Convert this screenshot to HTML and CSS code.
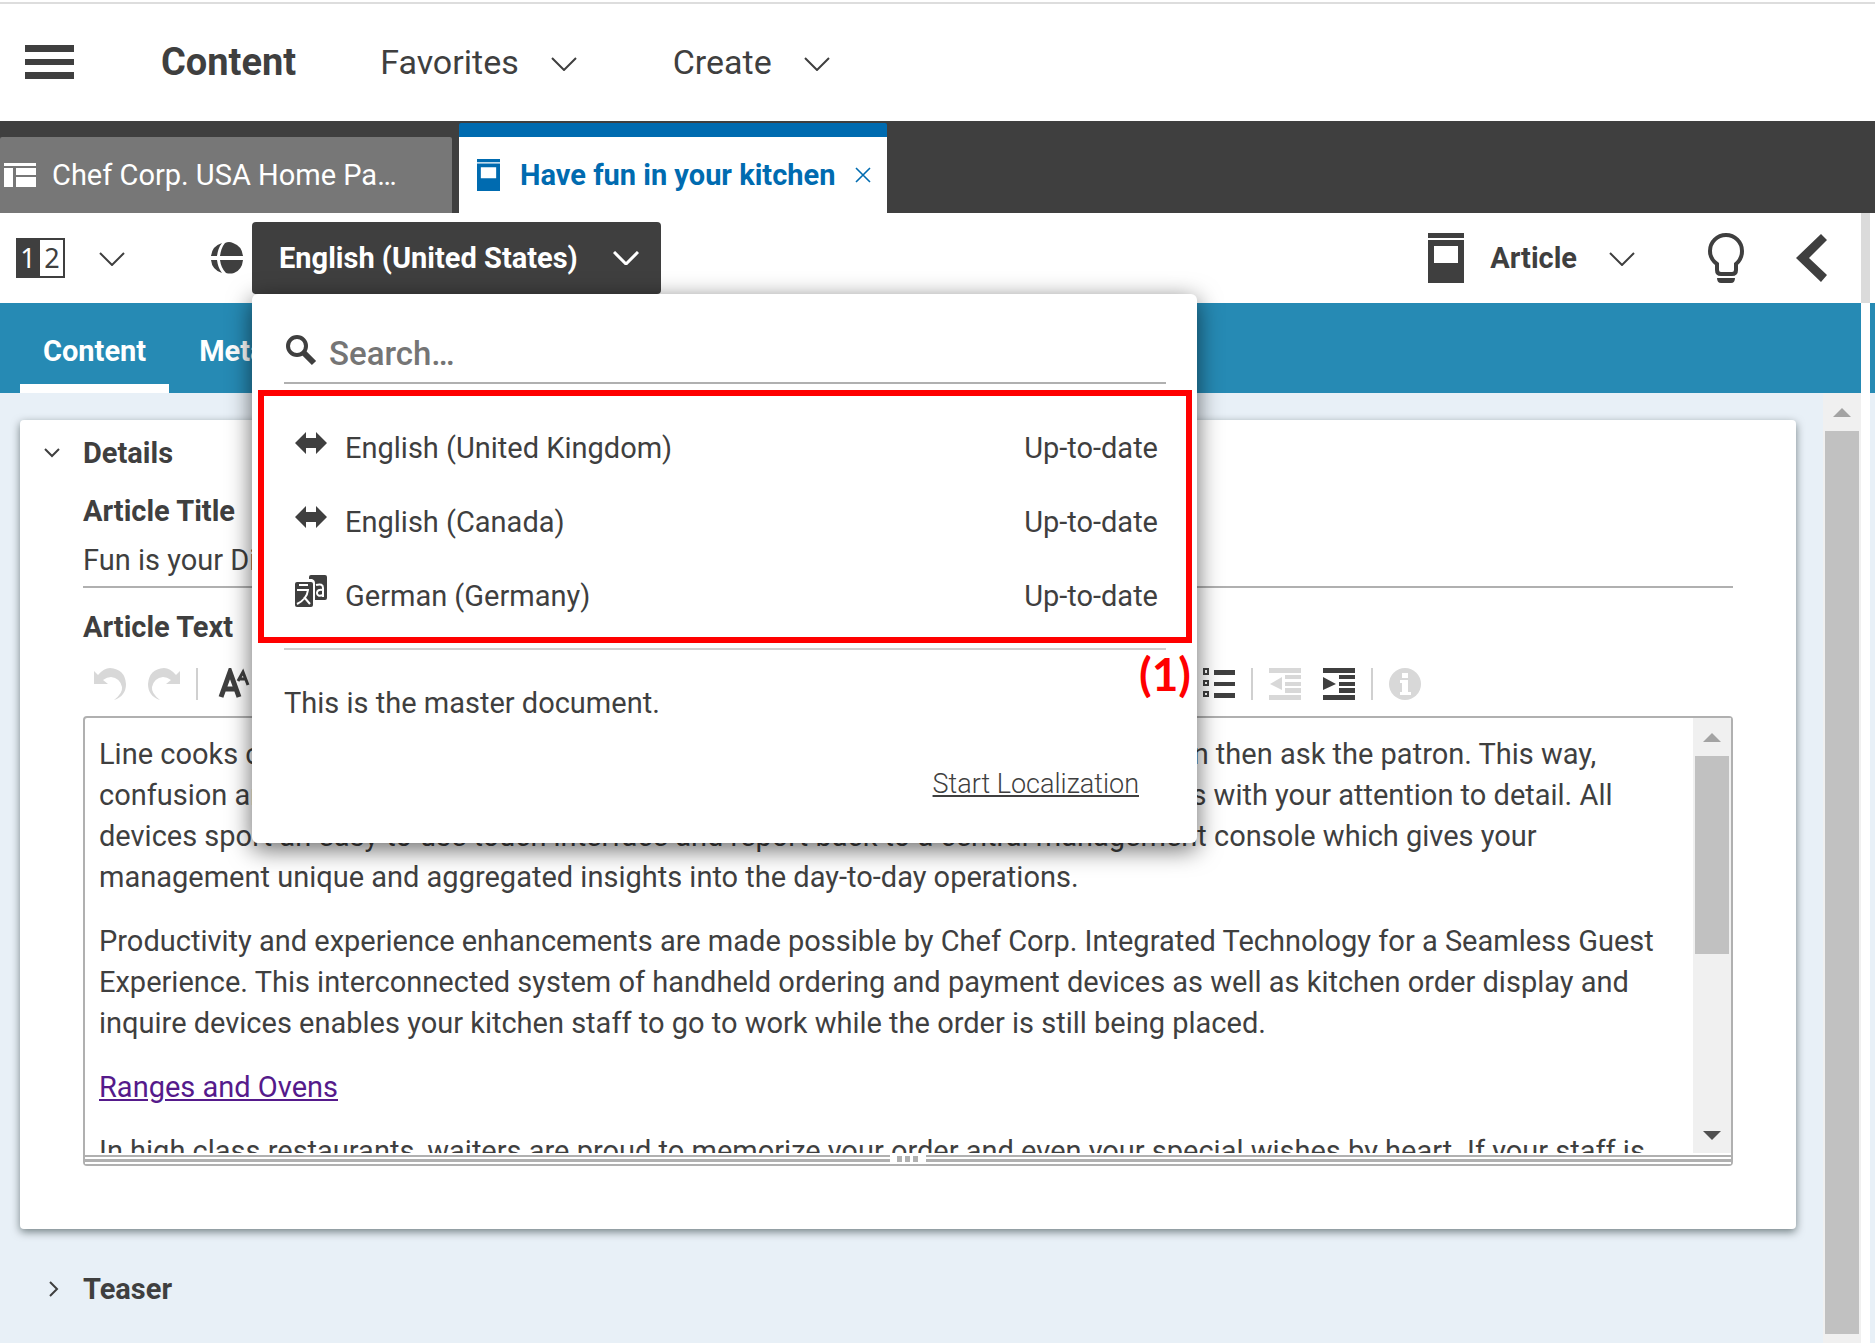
FILE: index.html
```html
<!DOCTYPE html>
<html lang="en">
<head>
<meta charset="utf-8">
<title>Content</title>
<link rel="stylesheet" href="styles.css">
</head>
<body>
<svg class="defs" width="0" height="0" aria-hidden="true">
  <symbol id="chevron" viewBox="0 0 26 14"><path d="M1 1l12 12L25 1" fill="none" stroke="currentColor" stroke-width="2"/></symbol>
  <symbol id="document" viewBox="0 0 36 50"><path d="M0 0h36v5H0zM0 7h36v43H0zM6 13v17h24V13z" fill="currentColor" fill-rule="evenodd"/></symbol>
  <symbol id="sync" viewBox="0 0 32 22"><path d="M0 11L11 0v6h10V0l11 11-11 11v-6H11v6z" fill="currentColor"/></symbol>
</svg>

<header class="topbar">
  <button class="menu-button" aria-label="Menu"><svg width="49" height="34" viewBox="0 0 49 34"><path d="M0 0h49v7H0zM0 14h49v6H0zM0 27h49v7H0z" fill="currentColor"/></svg></button>
  <button class="top-title">Content</button>
  <button class="top-link">Favorites <svg class="chevron"><use href="#chevron"/></svg></button>
  <button class="top-link">Create <svg class="chevron"><use href="#chevron"/></svg></button>
</header>

<nav class="doc-tabs">
  <button class="doc-tab"><svg width="32" height="24" viewBox="0 0 32 24"><path d="M0 0h32v3H0zM0 5h9v19H0zM12 5h20v7H12zM12 14h20v10H12z" fill="currentColor"/></svg>Chef Corp. USA Home Pa…</button>
  <div class="doc-tab active">
    <svg width="23" height="32"><use href="#document"/></svg><span>Have fun in your kitchen</span>
    <button class="close" aria-label="Close"><svg width="16" height="16" viewBox="0 0 16 16"><path d="M1 1l14 14M15 1L1 15" stroke="currentColor" stroke-width="1.6"/></svg></button>
  </div>
</nav>

<div class="workspace">
  <section class="main">
    <div class="toolbar">
      <button class="compare" aria-label="Compare versions"><svg width="49" height="40" viewBox="0 0 49 40"><rect x="1" y="1" width="47" height="38" fill="#fff" stroke="#3f3f3f" stroke-width="2"/><path d="M0 0h24v40H0z" fill="#3f3f3f"/><text class="digit light" x="12" y="30">1</text><text class="digit" x="36" y="30">2</text></svg><svg class="chevron"><use href="#chevron"/></svg></button>
      <svg class="globe" width="32" height="32" viewBox="0 0 32 32"><g fill="currentColor"><path d="M11 1Q1 4 0 14h6Q7 6 11 1zM14 1Q10 6 9 14h23Q31 4 22 1Q18-1 14 1zM0 18q1 10 11 13-4-5-5-13zM9 18q1 8 6 13 4 1 8 0 8-3 9-13z"/></g></svg>
      <div class="language">
        <button class="language-button">English (United States) <svg class="chevron" viewBox="0 0 26 14"><path d="M1 1l12 12L25 1" fill="none" stroke="currentColor" stroke-width="3"/></svg></button>
        <div class="popup">
          <label class="search"><svg width="32" height="32" viewBox="0 0 32 32"><circle cx="12" cy="12" r="9" fill="none" stroke="currentColor" stroke-width="4"/><path d="M18 18l11 11" stroke="currentColor" stroke-width="6"/></svg><input type="text" placeholder="Search…" aria-label="Search"></label>
          <ul class="locales">
            <li><svg class="sync"><use href="#sync"/></svg><span>English (United Kingdom)</span><span class="status">Up-to-date</span></li>
            <li><svg class="sync"><use href="#sync"/></svg><span>English (Canada)</span><span class="status">Up-to-date</span></li>
            <li><svg class="translate" width="32" height="32" viewBox="0 0 32 32"><path d="M14 4V2q0-2 2-2h14q2 0 2 2v21q0 2-2 2H20V8q0-3-3-4z" fill="currentColor"/><path d="M21 10q7-2 7 3v9M28 15q-6-1-6 3t6 2" fill="none" stroke="#fff" stroke-width="2"/><rect y="7" width="18" height="25" rx="2" fill="currentColor"/><path d="M4 10h9M2 15h11q-1 9-11 14M9 22l6 7" fill="none" stroke="#fff" stroke-width="2"/></svg><span>German (Germany)</span><span class="status">Up-to-date</span></li>
          </ul>
          <div class="popup-foot">
            <p>This is the master document.</p>
            <a href="#">Start Localization</a>
          </div>
          <div class="callout"></div>
          <div class="callout-label">(1)</div>
        </div>
      </div>
      <div class="toolbar-right">
        <button class="type"><svg width="36" height="50"><use href="#document"/></svg><span>Article</span><svg class="chevron"><use href="#chevron"/></svg></button>
        <button aria-label="Hints"><svg width="36" height="50" viewBox="0 0 36 50"><path d="M9 31Q2 26 2 18a16 16 0 0 1 32 0q0 8-6 13v6q0 4-4 4H13q-4 0-4-4z" fill="none" stroke="currentColor" stroke-width="4"/><path d="M9 45h18q0 5-4 5H13q-4 0-4-5z" fill="currentColor"/></svg></button>
        <button aria-label="Collapse"><svg width="31" height="50" viewBox="0 0 31 50"><path d="M0 25L25 1l6 6-18 18 18 17-6 7z" fill="currentColor"/></svg></button>
      </div>
    </div>

    <nav class="form-tabs"><button class="active">Content</button><button>Metadata</button></nav>

    <div class="form-area">
      <div class="form">
        <section class="panel">
          <button class="panel-title"><svg width="16" height="10" viewBox="0 0 16 10"><path d="M1 1l7 7 7-7" fill="none" stroke="currentColor" stroke-width="2"/></svg>Details</button>
          <div class="fields">
            <label class="field-label" for="title">Article Title</label>
            <input class="title-input" id="title" type="text" value="Fun is your Dish">
            <span class="field-label">Article Text</span>
            <div class="rte-tools">
              <button class="off" aria-label="Undo"><svg width="32" height="32" viewBox="0 0 32 32"><path id="undo" d="M0 3l4 4Q10 0 16 0q15 1 16 16 0 12-12 16 9-7 8-13-2-9-11-10-4 0-8 3l5 4H0z" fill="currentColor"/></svg></button>
              <button class="off" aria-label="Redo"><svg width="32" height="32" viewBox="0 0 32 32"><use href="#undo" transform="matrix(-1 0 0 1 32 0)"/></svg></button>
              <i class="rule"></i>
              <button class="font-tool" aria-label="Font"><svg width="32" height="32" viewBox="0 0 32 32"><g fill="none" stroke="currentColor"><path d="M3 29L12 4l9 25M6 21h12" stroke-width="5"/><path d="M20 13l5-9 5 13M22 11h6" stroke-width="3"/></g></svg></button>
              <div class="rte-right">
                <button aria-label="Bulleted list"><svg width="32" height="32" viewBox="0 0 32 32"><path d="M1 1h4v5H1zM1 13h4v4H1zM1 24h4v4H1z" fill="none" stroke="currentColor" stroke-width="2"/><path d="M11 2h21v5H11zM11 14h21v4H11zM11 25h21v5H11z" fill="currentColor"/></svg></button>
                <i class="rule"></i>
                <button class="off" aria-label="Outdent"><svg width="32" height="32" viewBox="0 0 32 32"><path d="M0 0h32v5H0zM16 7h16v4H16zM16 14h16v4H16zM16 20h16v5H16zM0 27h32v5H0zM1 16l12-7v13z" fill="currentColor"/></svg></button>
                <button aria-label="Indent"><svg width="32" height="32" viewBox="0 0 32 32"><path d="M0 0h32v5H0zM16 7h16v4H16zM16 14h16v4H16zM16 20h16v5H16zM0 27h32v5H0zM13 16L0 9v13z" fill="currentColor"/></svg></button>
                <i class="rule"></i>
                <button class="off" aria-label="Info"><svg width="32" height="32" viewBox="0 0 32 32"><circle cx="16" cy="16" r="16" fill="currentColor"/><path d="M13 5h6v5h-6zM11 12h8v12h3v3H11v-3h2v-9h-2z" fill="#fff"/></svg></button>
              </div>
            </div>
            <div class="editor">
              <div class="editor-body">
                <div class="editor-text">
                  <p>Line cooks can check the status of every dish on the line at any time if needed and can then ask the patron. This way,<br>confusion and mistakes are avoided and you will be impressing all of your loyal guests with your attention to detail. All<br>devices sport an easy-to-use touch interface and report back to a central management console which gives your<br>management unique and aggregated insights into the day-to-day operations.</p>
                  <p>Productivity and experience enhancements are made possible by Chef Corp. Integrated Technology for a Seamless Guest<br>Experience. This interconnected system of handheld ordering and payment devices as well as kitchen order display and<br>inquire devices enables your kitchen staff to go to work while the order is still being placed.</p>
                  <p><a href="#">Ranges and Ovens</a></p>
                  <p>In high class restaurants, waiters are proud to memorize your order and even your special wishes by heart. If your staff is</p>
                </div>
                <div class="scrollbar"><b class="up"></b><div class="thumb short"></div><b class="down"></b></div>
              </div>
              <div class="resizer"><span><i></i><i></i><i></i></span></div>
            </div>
          </div>
        </section>
        <button class="panel-title teaser"><svg width="16" height="16" viewBox="0 0 16 16"><path d="M6 1l7 7-7 7" fill="none" stroke="currentColor" stroke-width="2"/></svg>Teaser</button>
      </div>
      <div class="scrollbar"><b class="up"></b><div class="thumb"></div></div>
    </div>
  </section>
  <div class="splitter"></div>
  <aside class="side"></aside>
</div>
</body>
</html>
```
FILE: styles.css
```css
* { box-sizing: border-box; }
body {
  margin: 0;
  height: 100vh;
  display: flex;
  flex-direction: column;
  overflow: hidden;
  background: #fff;
  color: #3f3f3f;
  font: 29px/40px Roboto, "Liberation Sans", sans-serif;
}
button, input {
  font: inherit;
  color: inherit;
  background: none;
  border: 0;
  padding: 0;
  white-space: nowrap;
}
p, ul { margin: 0; padding: 0; list-style: none; }
svg { flex: none; display: block; }
.defs { position: absolute; }
.chevron { width: 26px; height: 14px; }
.digit { font: 27px "Noto Sans", sans-serif; text-anchor: middle; fill: #3f3f3f; }
.digit.light { fill: #fff; }

.topbar {
  display: flex;
  align-items: center;
  flex: none;
  height: 121px;
  padding: 3px 0 0 25px;
  box-shadow: inset 0 2px #fff, inset 0 4px #ddd;
}
.top-title { margin-left: 87px; font-size: 38px; font-weight: 700; }
.top-link { display: flex; align-items: center; gap: 32px; margin-left: 84px; font-size: 34px; }
.top-link + .top-link { margin-left: 96px; }
.top-link .chevron { margin-top: 4px; }

.doc-tabs {
  display: flex;
  align-items: flex-end;
  gap: 7px;
  flex: none;
  height: 92px;
  background: #3f3f3f;
}
.doc-tab {
  display: flex;
  align-items: center;
  gap: 16px;
  width: 452px;
  height: 76px;
  padding-left: 4px;
  border-radius: 2px 2px 0 0;
  background: #777;
  color: #fff;
}
.doc-tab.active {
  gap: 20px;
  width: 428px;
  height: 90px;
  padding-left: 18px;
  border-top: 14px solid #006bb0;
  background: #fff;
  color: #006bb0;
  font-weight: 700;
}

.workspace { display: flex; flex: 1; min-height: 0; }
.main { display: flex; flex-direction: column; flex: 1; min-width: 0; }
.toolbar { display: flex; align-items: center; flex: none; height: 90px; padding: 0 34px 0 16px; }
.compare { display: flex; align-items: center; gap: 34px; }
.compare .chevron { margin-top: 2px; }
.globe { margin: 0 9px 0 86px; }
.language { position: relative; z-index: 2; }
.language-button {
  display: flex;
  align-items: center;
  justify-content: space-between;
  width: 409px;
  height: 72px;
  padding: 0 22px 0 27px;
  border-radius: 4px;
  background: #3f3f3f;
  color: #fff;
  font-weight: 700;
}
.toolbar-right { display: flex; align-items: center; gap: 52px; margin-left: auto; font-weight: 700; }
.type { display: flex; align-items: center; gap: 26px; margin-right: 21px; }
.type .chevron { margin: 2px 0 0 6px; }

.popup {
  position: absolute;
  top: 72px;
  left: 0;
  width: 945px;
  height: 549px;
  padding: 30px 31px 0 32px;
  border-radius: 6px;
  background: #fff;
  box-shadow: 0 6px 24px rgba(0, 0, 0, .6);
}
.search { display: flex; gap: 12px; height: 60px; border-bottom: 2px solid #b0b0b0; padding: 10px 0 0 1px; }
.search input { height: 40px; font-size: 33px; font-weight: 500; outline: 0; }
.search input::placeholder { color: #757575; opacity: 1; }
.locales { height: 266px; padding-top: 27px; border-bottom: 2px solid #d0d0d0; }
.locales li { display: flex; align-items: center; gap: 18px; height: 74px; padding: 0 8px 0 11px; }
.sync { width: 32px; height: 22px; margin-bottom: 10px; }
.translate { margin-bottom: 10px; }
.status { margin-left: auto; }
.popup-foot { display: flex; flex-direction: column; gap: 41px; padding-top: 33px; }
.popup-foot a { align-self: flex-end; margin-right: 27px; color: inherit; font-size: 27px; font-weight: 300; }
.callout { position: absolute; inset: 96px 5px 200px 6px; border: 6px solid #f00; }
.callout-label { position: absolute; right: 6px; top: 350px; color: #f00; font: 700 46px/60px Lato, sans-serif; }

.form-tabs { display: flex; flex: none; height: 90px; padding-left: 20px; background: #268ab4; color: #fff; }
.form-tabs button { padding: 6px 23px 0; margin-right: 7px; font-weight: 700; border: solid transparent; border-width: 9px 0; }
.form-tabs .active { border-bottom-color: #fff; }

.form-area { display: flex; flex: 1; min-height: 0; background: #e8f0f7; }
.form { flex: 1; min-width: 0; padding: 27px 27px 0 20px; }
.panel {
  height: 809px;
  padding: 13px 63px 0 24px;
  border-radius: 4px;
  background: #fff;
  box-shadow: 0 3px 8px rgba(0, 20, 20, .5);
}
.panel-title { display: flex; align-items: center; gap: 23px; font-weight: 700; }
.teaser { margin: 40px 0 0 24px; }
.fields { display: flex; flex-direction: column; padding: 18px 0 0 39px; }
.field-label { font-weight: 700; }
.title-input { height: 57px; margin-bottom: 19px; padding-top: 2px; border-bottom: 2px solid #b0b0b0; outline: 0; }
.rte-tools { display: flex; align-items: center; gap: 22px; height: 69px; padding: 4px 0 0 11px; }
.rule { width: 2px; height: 32px; margin: 0 -6px; background: #d0d0d0; }
.rte-right .rule { margin: 0 -6px; }
.off { color: #d8d8d8; }
.font-tool { margin-left: 4px; }
.rte-right { display: flex; gap: 22px; margin-right: auto; margin-left: 931px; }

.editor { border: 2px solid #b0b0b0; border-radius: 4px; }
.editor-body { display: flex; height: 435px; }
.editor-text { flex: 1; min-width: 0; padding: 16px 0 0 14px; overflow: hidden; line-height: 41px; white-space: nowrap; }
.editor-text p { margin-bottom: 23px; }
.editor-text a { color: #551a8b; }
.resizer {
  display: flex;
  justify-content: center;
  height: 11px;
  background: linear-gradient(#fff 2px, #b0b0b0 2px 4px, #fff 4px 6px, #b0b0b0 6px 9px, #fff 9px);
}
.resizer span { display: flex; gap: 3px; width: 36px; height: 11px; padding: 3px 7px; background: #fff; }
.resizer i { width: 5px; height: 6px; background: #b0b0b0; }

.scrollbar { display: flex; flex-direction: column; align-items: center; flex: none; width: 38px; padding-bottom: 9px; background: #f0f0f0; }
.up { width: 0; height: 0; margin: 15px 0 14px; border: solid transparent; border-width: 0 9px 9px; border-bottom-color: #a3a3a3; }
.down { width: 0; height: 0; margin: auto 0 4px; border: solid transparent; border-width: 9px 9px 0; border-top-color: #505050; }
.thumb { flex: 1; width: 34px; background: #c1c1c1; }
.thumb.short { flex: none; height: 198px; }

.splitter { width: 9px; background: linear-gradient(#dbdbdb 90px, #fff 90px); }
.side { width: 5px; background: linear-gradient(#fff 90px, #268ab4 90px 180px, #e8f0f7 180px); }
```
